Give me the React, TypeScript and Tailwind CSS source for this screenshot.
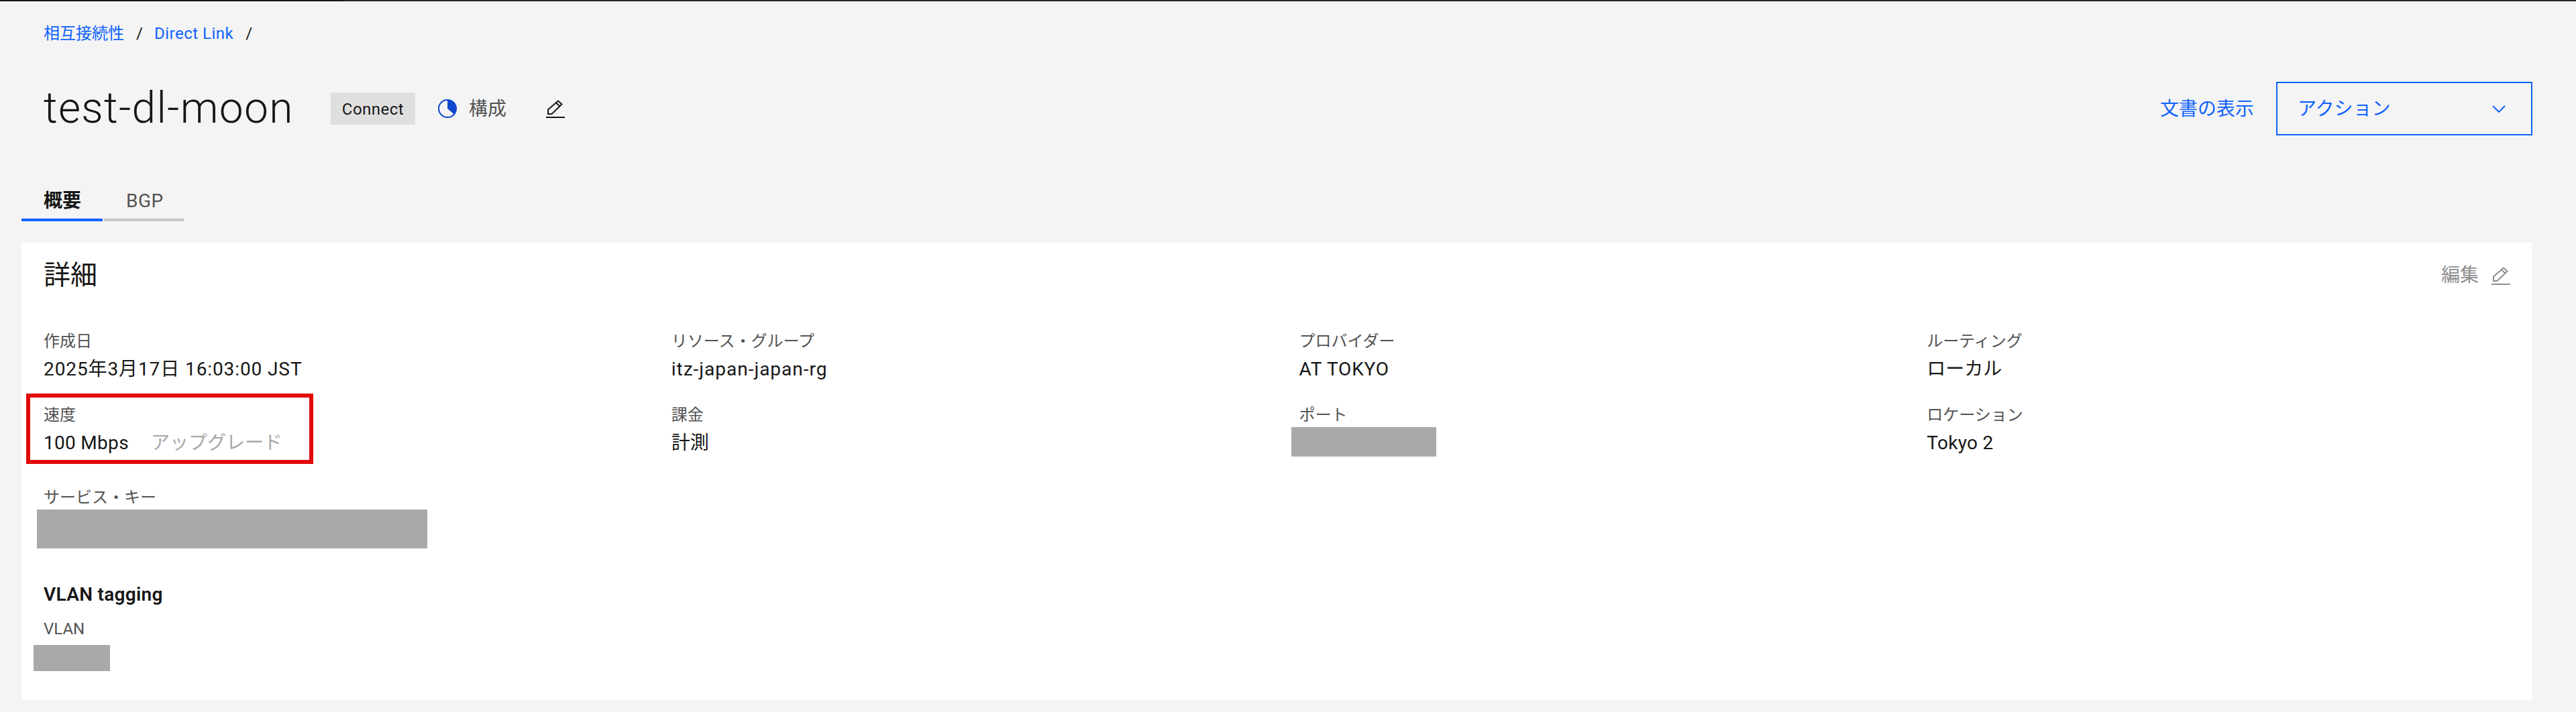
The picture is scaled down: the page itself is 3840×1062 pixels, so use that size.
import React from "react";

const font = "font-['Roboto','Noto_Sans_CJK_JP',sans-serif]";

const Pencil = ({ className }: { className: string }) => (
  <svg viewBox="0 0 28 27" className={className} fill="none" stroke="currentColor" strokeWidth="2">
    <path d="M3 21 V14.5 L18 1.5 L23.5 6.5 L8.5 21 Z" />
    <path d="M15 4.5 L20.5 9.5" />
    <path d="M0 26 H28" />
  </svg>
);

const Field = ({ label, children }: { label: string; children: React.ReactNode }) => (
  <div className="pl-[33px]">
    <div className="text-[24px] leading-[32px] text-[#525252]">{label}</div>
    <div className="mt-[6px] h-[40px] text-[28px] leading-[40px] text-[#161616]">{children}</div>
  </div>
);

const Redacted = ({ className }: { className: string }) => <div className={`bg-[#a9a9a9] ${className}`} />;

export default function App() {
  return (
    <div className={`relative h-[1062px] overflow-hidden bg-[#f4f4f4] ${font}`}>
      <div className="flex h-[2px]">
        <div className="w-[511px] bg-[#161616]" />
        <div className="flex-1 bg-[#262626]" />
      </div>

      <nav className="mt-[32px] flex h-[32px] items-center pl-[65px] text-[24px] text-[#0f62fe]">
        <span>相互接続性</span>
        <span className="mx-[18px] text-[#161616]">/</span>
        <span className="-ml-[1px] tracking-[0.5px]">Direct Link</span>
        <span className="mx-[18px] text-[#161616]">/</span>
      </nav>

      <div className="mt-[56px] flex h-[80px] items-center pl-[65px] pr-[65px]">
        <h1 className="w-[428px] text-[64px] leading-[80px] font-light tracking-[1.3px] text-[#161616]">test-dl-moon</h1>
        <span className="flex h-[48px] w-[126px] items-center justify-center bg-[#e0dfdf] pt-[2px] text-[24px] tracking-[0.5px] text-[#161616]">Connect</span>
        <svg viewBox="0 0 28 28" className="ml-[34px] h-[28px] w-[28px]">
          <circle cx="14" cy="14" r="13" fill="none" stroke="#0f48cf" strokeWidth="2" />
          <path d="M14 1 A13 13 0 0 1 24 22.4 L14 14 Z" fill="#0f48cf" />
        </svg>
        <span className="ml-[18px] pt-[2px] text-[28px] text-[#525252]">構成</span>
        <Pencil className="ml-[59px] h-[27px] w-[28px] text-[#161616]" />
        <div className="ml-auto flex items-center">
          <span className="pt-[2px] text-[28px] text-[#0f62fe]">文書の表示</span>
          <button className="ml-[33px] flex h-[80px] w-[382px] items-center justify-between border-2 border-[#0f62fe] pl-[32px] pr-[38px] text-[28px] text-[#0f62fe]">
            <span className="-ml-[2px] pt-[2px]">アクション</span>
            <svg viewBox="0 0 20 11" className="h-[11px] w-[20px]" fill="none" stroke="currentColor" strokeWidth="2">
              <path d="M1 1 L10 10 L19 1" />
            </svg>
          </button>
        </div>
      </div>

      <div className="mt-[78px] flex pl-[32px]">
        <div className="w-[121px] border-b-4 border-[#0f62fe] pb-[6px] pl-[33px] text-[28px] leading-[40px] font-semibold text-[#161616]">概要</div>
        <div className="ml-[2px] w-[119px] border-b-4 border-[#c6c6c6] pb-[6px] pl-[33px] text-[28px] leading-[40px] tracking-[0.5px] text-[#525252]">BGP</div>
      </div>

      <section className="ml-[32px] mt-[32px] h-[682px] w-[3743px] bg-white">
        <div className="flex h-[80px] items-center justify-between pl-[33px] pr-[33px] pt-[18px]">
          <h2 className="text-[40px] leading-[48px] text-[#161616]">詳細</h2>
          <div className="flex items-center text-[28px] text-[#8d8d8d]">
            <span>編集</span>
            <Pencil className="ml-[19px] h-[27px] w-[28px]" />
          </div>
        </div>

        <div className="mt-[51px] grid grid-cols-4 gap-y-[32px]">
          <Field label="作成日">
            <span className="tracking-[0.9px]">2025年3月17日 16:03:00 JST</span>
          </Field>
          <Field label="リソース・グループ">
            <span className="tracking-[1px]">itz-japan-japan-rg</span>
          </Field>
          <Field label="プロバイダー">
            <span className="tracking-[0.8px]">AT TOKYO</span>
          </Field>
          <Field label="ルーティング">ローカル</Field>
          <Field label="速度">
            <span className="tracking-[0.3px]">100 Mbps</span>
            <span className="ml-[33px] text-[#a8a8a8]">アップグレード</span>
          </Field>
          <Field label="課金">計測</Field>
          <div className="pl-[33px]">
            <div className="text-[24px] leading-[32px] text-[#525252]">ポート</div>
            <Redacted className="-ml-[12px] mt-[2px] h-[44px] w-[216px]" />
          </div>
          <Field label="ロケーション">
            <span className="tracking-[0.3px]">Tokyo 2</span>
          </Field>
        </div>

        <div className="mt-[45px] pl-[33px]">
          <div className="text-[24px] leading-[32px] text-[#525252]">サービス・キー</div>
          <Redacted className="-ml-[10px] mt-[2px] h-[58px] w-[582px]" />
        </div>

        <h3 className="mt-[49px] pl-[33px] text-[28px] leading-[40px] font-semibold tracking-[0.3px] text-[#161616]">VLAN tagging</h3>

        <div className="mt-[15px] pl-[33px]">
          <div className="text-[24px] leading-[32px] text-[#525252]">VLAN</div>
          <Redacted className="-ml-[15px] mt-[8px] h-[39px] w-[114px]" />
        </div>
      </section>

      <div className="absolute left-[39px] top-[587px] h-[105px] w-[428px] border-[6px] border-[#e30808]" />
    </div>
  );
}
